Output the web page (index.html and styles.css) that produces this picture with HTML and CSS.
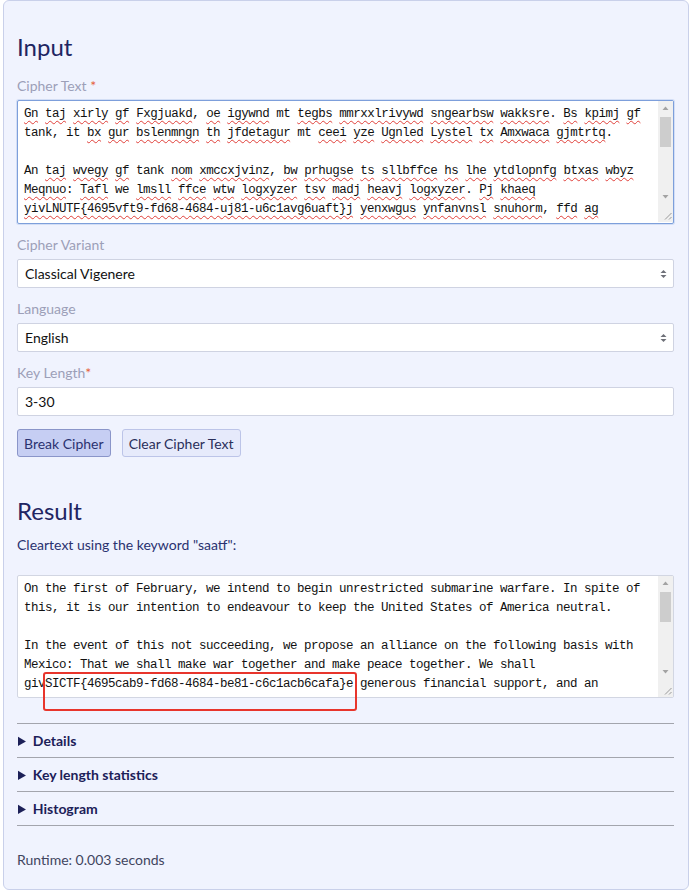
FILE: index.html
```html
<!DOCTYPE html>
<html lang="en">
<head>
<meta charset="utf-8">
<title>Vigenere Breaker</title>
<link rel="stylesheet" href="styles.css">
</head>
<body>
<main class="card">
  <h2 class="title">Input</h2>

  <div class="field">
    <label class="label">Cipher Text <span class="req">*</span></label>
    <div class="area-wrap">
      <div class="area area-focus" role="textbox"><span class="sp">Gn</span> <span class="sp">taj</span> <span class="sp">xirly</span> <span class="sp">gf</span> <span class="sp">Fxgjuakd</span>, <span class="sp">oe</span> <span class="sp">igywnd</span> mt <span class="sp">tegbs</span> <span class="sp">mmrxxlrivywd</span> <span class="sp">sngearbsw</span> <span class="sp">wakksre</span>. <span class="sp">Bs</span> <span class="sp">kpimj</span> <span class="sp">gf</span>
tank, it <span class="sp">bx</span> <span class="sp">gur</span> <span class="sp">bslenmngn</span> <span class="sp">th</span> <span class="sp">jfdetagur</span> mt <span class="sp">ceei</span> <span class="sp">yze</span> <span class="sp">Ugnled</span> <span class="sp">Lystel</span> <span class="sp">tx</span> <span class="sp">Amxwaca</span> <span class="sp">gjmtrtq</span>.

An <span class="sp">taj</span> <span class="sp">wvegy</span> <span class="sp">gf</span> tank <span class="sp">nom</span> <span class="sp">xmccxjvinz</span>, <span class="sp">bw</span> <span class="sp">prhugse</span> <span class="sp">ts</span> <span class="sp">sllbffce</span> <span class="sp">hs</span> <span class="sp">lhe</span> <span class="sp">ytdlopnfg</span> <span class="sp">btxas</span> <span class="sp">wbyz</span>
<span class="sp">Meqnuo</span>: <span class="sp">Tafl</span> we <span class="sp">lmsll</span> <span class="sp">ffce</span> <span class="sp">wtw</span> <span class="sp">logxyzer</span> <span class="sp">tsv</span> <span class="sp">madj</span> <span class="sp">heavj</span> <span class="sp">logxyzer</span>. <span class="sp">Pj</span> <span class="sp">khaeq</span>
<span class="sp">yivLNUTF{4695vft9-fd68-4684-uj81-u6c1avg6uaft}j</span> <span class="sp">yenxwgus</span> <span class="sp">ynfanvnsl</span> <span class="sp">snuhorm</span>, <span class="sp">ffd</span> <span class="sp">ag</span></div>
      <svg class="sbar" width="15" height="121" viewBox="0 0 15 121" aria-hidden="true">
        <rect x="0" y="0" width="15" height="122" fill="#f0f0f0"/>
        <path d="M4.5 9 L10.5 9 L7.5 5.5 Z" fill="#a3a3a3"/>
        <rect x="2" y="16" width="11" height="30" fill="#cdcdcd"/>
        <path d="M4.5 94 L10.5 94 L7.5 97.5 Z" fill="#a3a3a3"/>
        <path d="M13.5 112 L7 118.5 M13.5 116 L11 118.5" stroke="#9a9a9a" stroke-width="1" fill="none"/>
      </svg>
    </div>
  </div>

  <div class="field">
    <label class="label">Cipher Variant</label>
    <div class="select-wrap">
      <select class="control select">
        <option>Classical Vigenere</option>
      </select>
      <svg class="chev" width="7" height="10" viewBox="0 0 7 10" aria-hidden="true">
        <path d="M3.5 1 L6.5 4 L0.5 4 Z" fill="#6e7078"/>
        <path d="M3.5 9 L6.5 6 L0.5 6 Z" fill="#6e7078"/>
      </svg>
    </div>
  </div>

  <div class="field">
    <label class="label">Language</label>
    <div class="select-wrap">
      <select class="control select">
        <option>English</option>
      </select>
      <svg class="chev" width="7" height="10" viewBox="0 0 7 10" aria-hidden="true">
        <path d="M3.5 1 L6.5 4 L0.5 4 Z" fill="#6e7078"/>
        <path d="M3.5 9 L6.5 6 L0.5 6 Z" fill="#6e7078"/>
      </svg>
    </div>
  </div>

  <div class="field field-last">
    <label class="label">Key Length<span class="req">*</span></label>
    <input class="control" type="text" value="3-30">
  </div>

  <div class="buttons">
    <button class="btn btn-primary" type="button">Break Cipher</button>
    <button class="btn btn-secondary" type="button">Clear Cipher Text</button>
  </div>

  <h2 class="title title-result">Result</h2>
  <p class="lead">Cleartext using the keyword "saatf":</p>

  <div class="area-wrap">
    <textarea class="area area-result" readonly spellcheck="false">
On the first of February, we intend to begin unrestricted submarine warfare. In spite of this, it is our intention to endeavour to keep the United States of America neutral.

In the event of this not succeeding, we propose an alliance on the following basis with Mexico: That we shall make war together and make peace together. We shall givSICTF{4695cab9-fd68-4684-be81-c6c1acb6cafa}e generous financial support, and an</textarea>
    <svg class="sbar" width="15" height="121" viewBox="0 0 15 121" aria-hidden="true">
      <rect x="0" y="0" width="15" height="121" fill="#f0f0f0"/>
      <path d="M4.5 9 L10.5 9 L7.5 5.5 Z" fill="#a3a3a3"/>
      <rect x="2" y="16" width="11" height="30" fill="#cdcdcd"/>
      <path d="M4.5 94 L10.5 94 L7.5 97.5 Z" fill="#a3a3a3"/>
      <path d="M13.5 112 L7 118.5 M13.5 116 L11 118.5" stroke="#9a9a9a" stroke-width="1" fill="none"/>
    </svg>
    <div class="highlight"></div>
  </div>

  <div class="sections">
    <details class="sec"><summary>Details</summary></details>
    <details class="sec"><summary>Key length statistics</summary></details>
    <details class="sec"><summary>Histogram</summary></details>
  </div>

  <p class="runtime">Runtime: 0.003 seconds</p>
</main>
</body>
</html>
```

FILE: styles.css
```css
* { box-sizing: border-box; }

html, body {
  margin: 0;
  padding: 0;
  background: #ffffff;
}

body {
  font-family: Lato, "Liberation Sans", sans-serif;
  font-size: 14px;
  color: #1f2562;
}

.card {
  width: 686px;
  margin: 0 0 0 3px;
  padding: 31px 14px 19px 13px;
  background: #f0f3fe;
  border: 1px solid #c9d0ea;
  border-radius: 6px;
}

.title {
  margin: 0 0 15px 0;
  font-size: 24px;
  line-height: 29px;
  font-weight: 400;
  color: #1f2562;
}

.title-result {
  margin: 39px 0 10px 0;
}

.field {
  margin-bottom: 11px;
}

.field-last {
  margin-bottom: 13px;
}

.label {
  display: block;
  font-size: 14px;
  line-height: 20px;
  margin-bottom: 4px;
  color: #9c9fb8;
}

.req {
  color: #e5603a;
}

.area-wrap {
  position: relative;
}

.area {
  display: block;
  width: 100%;
  height: 123px;
  margin: 0;
  padding: 4px 21px 4px 6px;
  background: #ffffff;
  font-family: "Liberation Mono", monospace;
  font-size: 12.5px;
  letter-spacing: -0.5px;
  line-height: 19px;
  color: #111111;
  white-space: pre;
  overflow: hidden;
  resize: none;
  border-radius: 2px;
}

.area-focus {
  height: 124px;
  border: 1px solid #7d9fdb;
  box-shadow: 0 0 0 1px rgba(125, 159, 219, 0.25);
}

.sbar {
  position: absolute;
  right: 1px;
  top: 1px;
  pointer-events: none;
}

.sp {
  text-decoration: underline wavy #e0403a;
  text-decoration-thickness: 1px;
  text-underline-offset: 3px;
  text-decoration-skip-ink: none;
}

.select-wrap {
  position: relative;
}

.control {
  display: block;
  width: 100%;
  height: 29px;
  margin: 0;
  padding: 0 7px;
  font-family: Lato, "Liberation Sans", sans-serif;
  font-size: 14px;
  color: #111111;
  background: #ffffff;
  border: 1px solid #cfd3e2;
  border-radius: 2px;
  outline: none;
}

.select {
  appearance: none;
  -webkit-appearance: none;
}

.chev {
  position: absolute;
  right: 7px;
  top: 10px;
  pointer-events: none;
}

.buttons {
  display: flex;
  gap: 11px;
}

.btn {
  height: 28px;
  padding: 0 6px;
  font-family: Lato, "Liberation Sans", sans-serif;
  font-size: 14px;
  border-radius: 3px;
  cursor: pointer;
}

.btn-primary {
  background: #c6cef3;
  border: 1px solid #8a95c9;
  color: #2b3270;
}

.btn-secondary {
  background: #e6eafb;
  border: 1px solid #bcc4e8;
  color: #2a2f5a;
}

.lead {
  margin: 0 0 20px 0;
  font-size: 14px;
  line-height: 20px;
  color: #2a3270;
}

.area-result {
  white-space: pre-wrap;
  border: 1px solid #d2d6e2;
  outline: none;
}

.highlight {
  position: absolute;
  left: 26px;
  top: 97px;
  width: 314px;
  height: 39px;
  border: 2px solid #e8352c;
  border-radius: 3px;
  pointer-events: none;
}

.sections {
  margin-top: 25px;
  border-bottom: 1px solid #a3a5ad;
}

.sec {
  border-top: 1px solid #a3a5ad;
  padding: 8px 0;
}

.sec summary {
  font-size: 14px;
  line-height: 17px;
  font-weight: 700;
  color: #1c2058;
  cursor: pointer;
  padding-left: 1px;
}

.runtime {
  margin: 24px 0 0 0;
  font-size: 14px;
  line-height: 20px;
  color: #41455e;
}
```
